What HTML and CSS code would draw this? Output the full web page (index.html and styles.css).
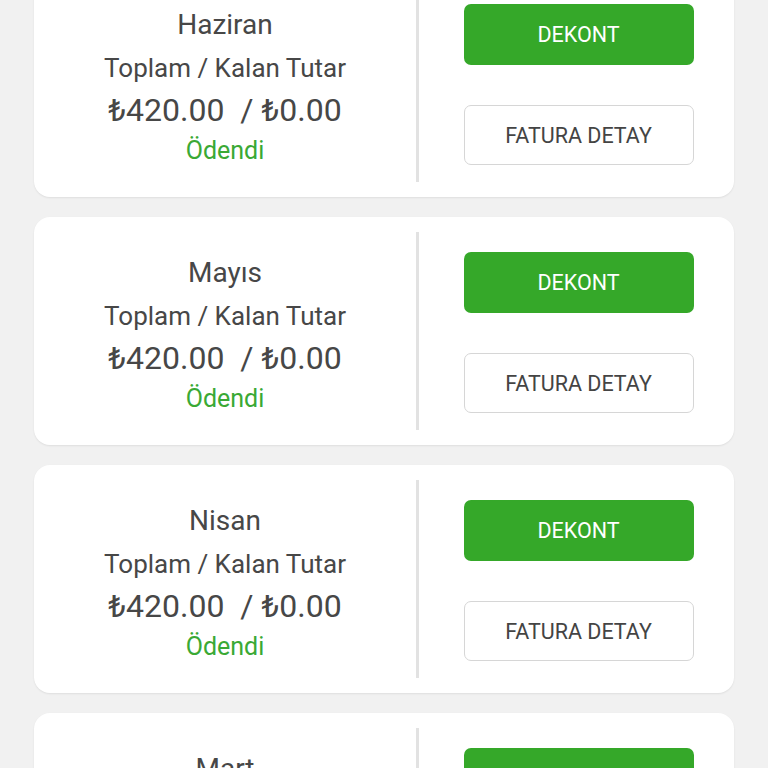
FILE: index.html
```html
<!DOCTYPE html>
<html lang="tr">
<head>
  <meta charset="UTF-8">
  <meta name="viewport" content="width=device-width, initial-scale=1.0">
  <title>Faturalar</title>
  <link rel="stylesheet" href="styles.css">
</head>
<body>
  <div class="list">
    <div class="card">
      <div class="info">
        <div class="month">Haziran</div>
        <div class="label">Toplam / Kalan Tutar</div>
        <div class="amount">₺420.00&nbsp; / ₺0.00</div>
        <div class="status">Ödendi</div>
      </div>
      <div class="divider"></div>
      <div class="actions">
        <a href="#" class="btn btn-green">DEKONT</a>
        <a href="#" class="btn btn-outline">FATURA DETAY</a>
      </div>
    </div>
    <div class="card">
      <div class="info">
        <div class="month">Mayıs</div>
        <div class="label">Toplam / Kalan Tutar</div>
        <div class="amount">₺420.00&nbsp; / ₺0.00</div>
        <div class="status">Ödendi</div>
      </div>
      <div class="divider"></div>
      <div class="actions">
        <a href="#" class="btn btn-green">DEKONT</a>
        <a href="#" class="btn btn-outline">FATURA DETAY</a>
      </div>
    </div>
    <div class="card">
      <div class="info">
        <div class="month">Nisan</div>
        <div class="label">Toplam / Kalan Tutar</div>
        <div class="amount">₺420.00&nbsp; / ₺0.00</div>
        <div class="status">Ödendi</div>
      </div>
      <div class="divider"></div>
      <div class="actions">
        <a href="#" class="btn btn-green">DEKONT</a>
        <a href="#" class="btn btn-outline">FATURA DETAY</a>
      </div>
    </div>
    <div class="card">
      <div class="info">
        <div class="month">Mart</div>
        <div class="label">Toplam / Kalan Tutar</div>
        <div class="amount">₺420.00&nbsp; / ₺0.00</div>
        <div class="status">Ödendi</div>
      </div>
      <div class="divider"></div>
      <div class="actions">
        <a href="#" class="btn btn-green">DEKONT</a>
        <a href="#" class="btn btn-outline">FATURA DETAY</a>
      </div>
    </div>
  </div>
</body>
</html>
```

FILE: styles.css
```css
body {
  margin: 0;
  background: #f1f1f1;
  font-family: Roboto, "Noto Sans", sans-serif;
  color: #474747;
  overflow: hidden;
}
.list {
  display: flex;
  flex-direction: column;
  gap: 20px;
  margin-top: -31px;
  padding: 0 34px;
}
.card {
  display: flex;
  height: 228px;
  background: #fff;
  border-radius: 16px;
  box-shadow: 0 1px 2px rgba(0, 0, 0, 0.08);
}
.info {
  width: 382px;
  display: flex;
  flex-direction: column;
  justify-content: center;
  text-align: center;
  padding-top: 6px;
}
.month {
  font-size: 28px;
  line-height: 44px;
}
.label {
  font-size: 26px;
  line-height: 42px;
}
.amount {
  font-size: 32px;
  line-height: 42px;
}
.status {
  font-size: 25px;
  line-height: 39px;
  color: #3aa935;
}
.divider {
  width: 3px;
  margin: 15px 0;
  background: #e2e2e2;
}
.actions {
  flex: 1;
  display: flex;
  flex-direction: column;
  justify-content: center;
  align-items: center;
  gap: 40px;
  padding: 3px 0 0 4px;
}
.btn {
  display: flex;
  align-items: center;
  justify-content: center;
  width: 230px;
  box-sizing: border-box;
  border-radius: 7px;
  font-size: 21.5px;
  text-decoration: none;
}
.btn-green {
  height: 61px;
  background: #35a829;
  color: #fff;
}
.btn-outline {
  height: 60px;
  background: #fff;
  border: 1px solid #d6d6d6;
  color: #444;
}
```
